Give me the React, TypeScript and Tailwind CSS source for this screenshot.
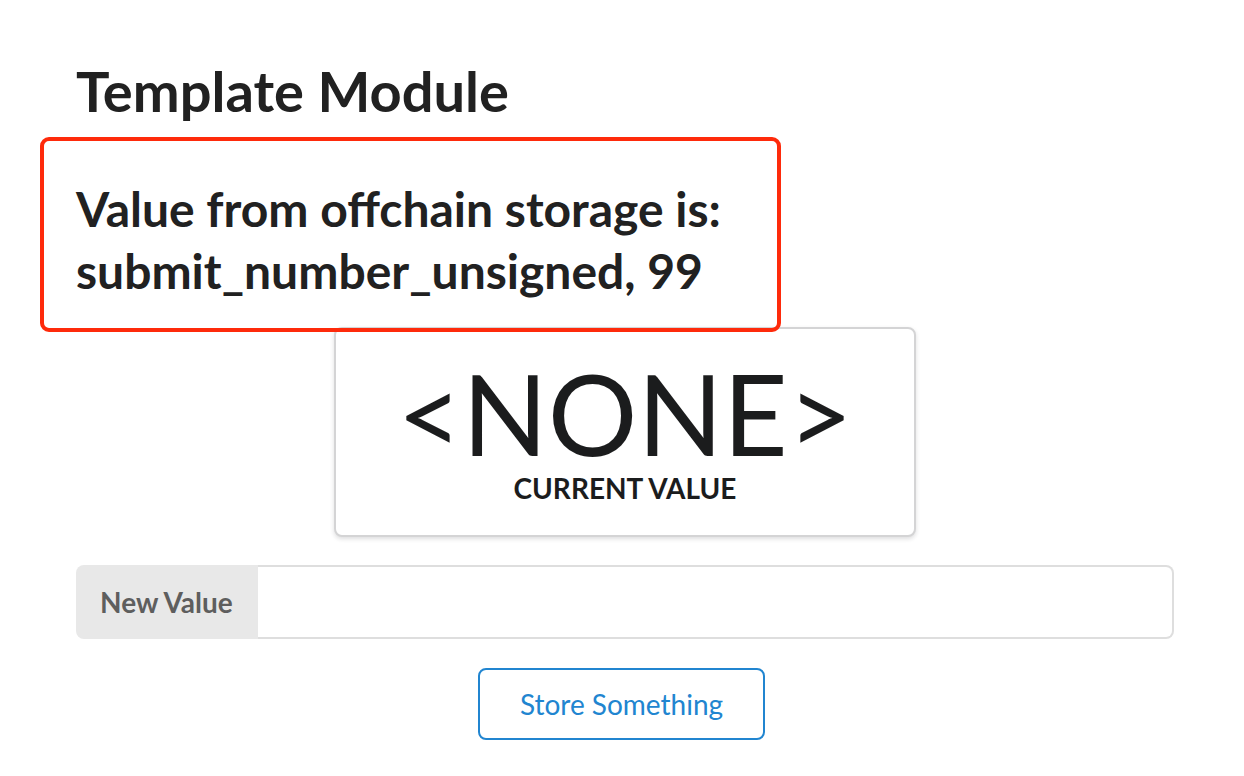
import React from "react";

const App = () => {
  return (
    <div className="relative w-[1244px] h-[776px] bg-white font-['Lato','Open_Sans',sans-serif] text-[#212121]">
      <div className="ml-[76px] w-[1098px] pt-[55px]">
        <h1 className="text-[56px] font-bold leading-[72px]">Template Module</h1>

        <h2 className="mt-[51px] text-[48px] font-bold leading-[62px]">
          Value from offchain storage is: submit_number_unsigned, 99
        </h2>

        {/* current value statistic */}
        <div className="mx-auto mt-[25px] w-[582px] rounded-[8px] border-2 border-[#d4d4d5] bg-white pt-[28px] pb-[33px] text-center shadow-[0_2px_4px_0_rgba(34,36,38,0.15)]">
          <div className="text-[112px] font-normal leading-none text-[#1b1c1d]">&lt;NONE&gt;</div>
          <div className="mt-[5px] text-[28px] font-bold uppercase leading-[28px] text-[#1b1c1d]">
            Current Value
          </div>
        </div>

        <div className="mt-[28px] flex h-[74px]">
          <div className="flex w-[182px] items-center rounded-l-[8px] bg-[#e8e8e8] pl-[24px] text-[28px] font-bold text-[#5e5e5e]">
            New Value
          </div>
          <input
            type="text"
            className="flex-1 rounded-r-[8px] border-2 border-l-0 border-[#dedede] bg-white px-[28px] text-[28px] outline-none"
          />
        </div>

        <div className="mt-[29px] text-center">
          <button className="mr-[7px] rounded-[8px] border-2 border-[#2185d0] bg-white px-[40px] py-[20px] text-[28px] font-normal leading-none text-[#2185d0]">
            Store Something
          </button>
        </div>
      </div>

      {/* annotation highlight */}
      <div className="absolute left-[40px] top-[137px] h-[195px] w-[741px] rounded-[9px] border-[4px] border-[#fe2a0b]" />
    </div>
  );
};

export default App;
